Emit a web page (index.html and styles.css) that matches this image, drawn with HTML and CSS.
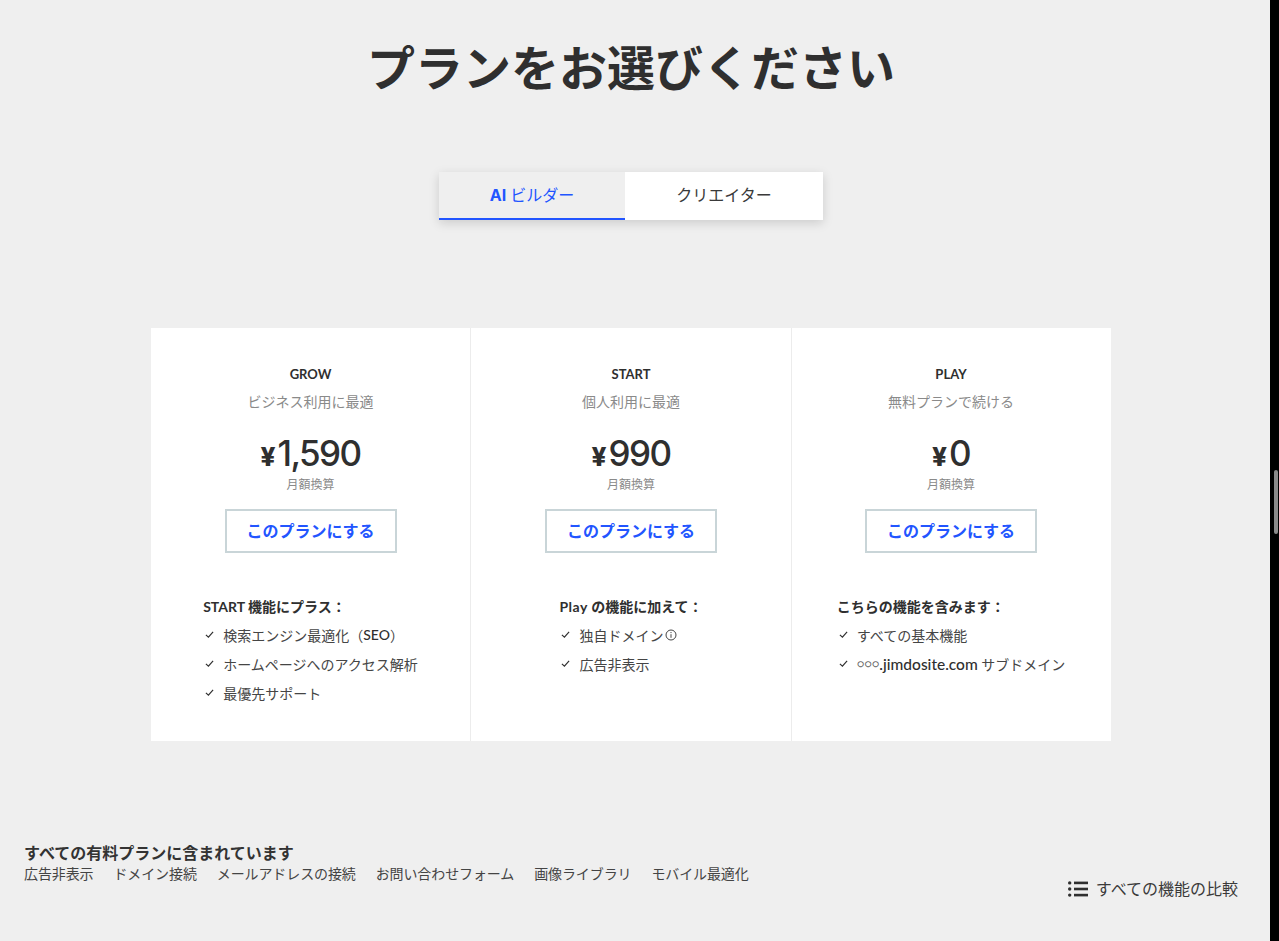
FILE: index.html
```html
<!DOCTYPE html>
<html lang="ja">
<head>
<meta charset="utf-8">
<title>プランをお選びください</title>
<link rel="stylesheet" href="styles.css">
</head>
<body>
<div class="page">
  <main class="main">
    <h1 class="title">プランをお選びください</h1>
    <div class="tabs">
      <button class="tab tab-active"><b class="tab-latin">AI</b> ビルダー</button>
      <button class="tab tab-plain">クリエイター</button>
    </div>
    <section class="plans">
      <article class="plan">
        <h2 class="plan-name">GROW</h2>
        <p class="plan-sub">ビジネス利用に最適</p>
        <p class="price"><span class="yen">¥</span>1,590</p>
        <p class="period">月額換算</p>
        <a class="cta">このプランにする</a>
        <div class="features">
          <h3 class="features-title">START 機能にプラス：</h3>
          <ul class="list">
            <li class="item"><svg class="check" viewBox="0 0 10 10"><path d="M1 5.4 3.8 8 9 2"/></svg>検索エンジン最適化（<span class="latin">SEO</span>）</li>
            <li class="item"><svg class="check" viewBox="0 0 10 10"><path d="M1 5.4 3.8 8 9 2"/></svg>ホームページへのアクセス解析</li>
            <li class="item"><svg class="check" viewBox="0 0 10 10"><path d="M1 5.4 3.8 8 9 2"/></svg>最優先サポート</li>
          </ul>
        </div>
      </article>
      <article class="plan">
        <h2 class="plan-name">START</h2>
        <p class="plan-sub">個人利用に最適</p>
        <p class="price"><span class="yen">¥</span>990</p>
        <p class="period">月額換算</p>
        <a class="cta">このプランにする</a>
        <div class="features">
          <h3 class="features-title"><span class="play">Play</span> の機能に加えて：</h3>
          <ul class="list">
            <li class="item"><svg class="check" viewBox="0 0 10 10"><path d="M1 5.4 3.8 8 9 2"/></svg>独自ドメイン<svg class="info" viewBox="0 0 12 12"><circle cx="6" cy="6" r="5"/><path d="M6 5.2v3.6M6 3v1.1"/></svg></li>
            <li class="item"><svg class="check" viewBox="0 0 10 10"><path d="M1 5.4 3.8 8 9 2"/></svg>広告非表示</li>
          </ul>
        </div>
      </article>
      <article class="plan">
        <h2 class="plan-name">PLAY</h2>
        <p class="plan-sub">無料プランで続ける</p>
        <p class="price"><span class="yen">¥</span>0</p>
        <p class="period">月額換算</p>
        <a class="cta">このプランにする</a>
        <div class="features">
          <h3 class="features-title">こちらの機能を含みます：</h3>
          <ul class="list">
            <li class="item"><svg class="check" viewBox="0 0 10 10"><path d="M1 5.4 3.8 8 9 2"/></svg>すべての基本機能</li>
            <li class="item"><svg class="check" viewBox="0 0 10 10"><path d="M1 5.4 3.8 8 9 2"/></svg><span class="dots">○○○</span><span class="latin domain">.jimdosite.com</span>&nbsp;サブドメイン</li>
          </ul>
        </div>
      </article>
    </section>
    <footer class="footer">
      <div class="included">
        <h4 class="included-title">すべての有料プランに含まれています</h4>
        <ul class="included-list">
          <li>広告非表示</li>
          <li>ドメイン接続</li>
          <li>メールアドレスの接続</li>
          <li>お問い合わせフォーム</li>
          <li>画像ライブラリ</li>
          <li>モバイル最適化</li>
        </ul>
      </div>
      <a class="compare">
        <svg class="compare-icon" viewBox="0 0 20 16"><circle cx="1.7" cy="1.9" r="1.7"/><circle cx="1.7" cy="8" r="1.7"/><circle cx="1.7" cy="14.1" r="1.7"/><rect x="6" y="0.6" width="14" height="2.6"/><rect x="6" y="6.7" width="14" height="2.6"/><rect x="6" y="12.8" width="14" height="2.6"/></svg>
        すべての機能の比較
      </a>
    </footer>
  </main>
  <aside class="scrollbar"><div class="thumb"></div></aside>
</div>
</body>
</html>
```
FILE: styles.css
```css
* { box-sizing: border-box; }
html, body { margin: 0; padding: 0; height: 100%; overflow: hidden; }
body {
  background: #efefef;
  color: #2f2f2f;
  font-family: "Lato", "Noto Sans CJK JP", sans-serif;
}
.page { display: flex; height: 941px; }
.main { flex: 1; min-width: 0; display: flex; flex-direction: column; }
.title {
  margin: 31px 8px 0 0;
  font-family: "Noto Sans CJK JP", sans-serif;
  font-size: 48px;
  line-height: 68px;
  font-weight: 700;
  text-align: center;
}
.tabs {
  align-self: center;
  margin: 73px 8px 0 0;
  display: flex;
  box-shadow: 0 3px 10px rgba(0,0,0,.15);
}
.tab {
  height: 48px;
  border: 0;
  border-bottom: 2px solid transparent;
  font-family: "Lato", "Noto Sans CJK JP", sans-serif;
  font-size: 16px;
  padding: 0 0 2px;
}
.tab-active { width: 186px; background: #efefef; color: #2255ff; border-bottom-color: #2255ff; }
.tab-latin { font-family: "Inter", sans-serif; font-weight: 700; }
.tab-plain { width: 198px; background: #fff; color: #3a3a3a; }
.plans {
  align-self: center;
  margin: 108px 8px 0 0;
  width: 960px;
  height: 413px;
  background: #fff;
  display: grid;
  grid-template-columns: 320px 321px 319px;
}
.plan {
  display: flex;
  flex-direction: column;
  align-items: center;
  padding-top: 36px;
  border-right: 1px solid #ececec;
}
.plan:last-child { border-right: 0; padding-right: 1px; }
.plan-name { margin: 0; font-size: 13px; line-height: 20px; font-weight: 700; }
.plan-sub { margin: 8px 0 0; font-size: 14px; line-height: 20px; color: #8a8a8a; }
.price {
  margin: 21px 0 0;
  font-family: "Inter", sans-serif;
  font-size: 35px;
  line-height: 40px;
  font-weight: 500;
  letter-spacing: -1.6px;
}
.yen { font-size: 26px; font-weight: 800; margin-right: 2px; letter-spacing: 0; }
.period { margin: 0; font-size: 12px; line-height: 16px; color: #8a8a8a; }
.cta {
  margin-top: 16px;
  width: 172px;
  height: 44px;
  padding-bottom: 2px;
  border: 2px solid #c9d5d8;
  display: flex;
  align-items: center;
  justify-content: center;
  color: #2255ff;
  font-size: 16px;
  font-weight: 700;
}
.features { margin-top: 44px; }
.features-title { margin: 0; font-size: 14px; line-height: 20px; font-weight: 700; }
.play { letter-spacing: .5px; }
.list { list-style: none; margin: 3px 0 0; padding: 0; }
.item {
  display: flex;
  align-items: center;
  height: 29px;
  font-size: 14px;
  color: #454545;
  white-space: nowrap;
}
.check {
  width: 9px;
  height: 9px;
  margin: 0 9px 0 2px;
  fill: none;
  stroke: #2f2f2f;
  stroke-width: 1.3;
}
.info {
  width: 12px;
  height: 12px;
  margin-left: 2px;
  fill: none;
  stroke: #444;
  stroke-width: 1;
}
.latin { color: #2f2f2f; font-weight: 500; }
.domain { font-size: 15.5px; }
.dots { font-size: 11.4px; color: #666; }
.footer {
  margin-top: 101px;
  display: flex;
  justify-content: space-between;
  align-items: flex-start;
  padding: 0 32px 0 24px;
}
.included-title { margin: 0; font-size: 16px; line-height: 22px; font-weight: 700; color: #333; }
.included-list {
  list-style: none;
  margin: -1px 0 0;
  padding: 0;
  display: flex;
  gap: 20px;
  font-size: 14px;
  line-height: 22px;
  letter-spacing: -.11px;
  color: #444;
}
.compare {
  margin-top: 35px;
  display: flex;
  align-items: center;
  gap: 8px;
  font-size: 16px;
  line-height: 24px;
  color: #3a3a3a;
}
.compare-icon { width: 20px; height: 16px; fill: #2f2f2f; }
.scrollbar { width: 9px; background: #000; padding: 470px 1px 0 4px; }
.thumb { height: 64px; border-radius: 2px; background: #8a8a8a; }
```
